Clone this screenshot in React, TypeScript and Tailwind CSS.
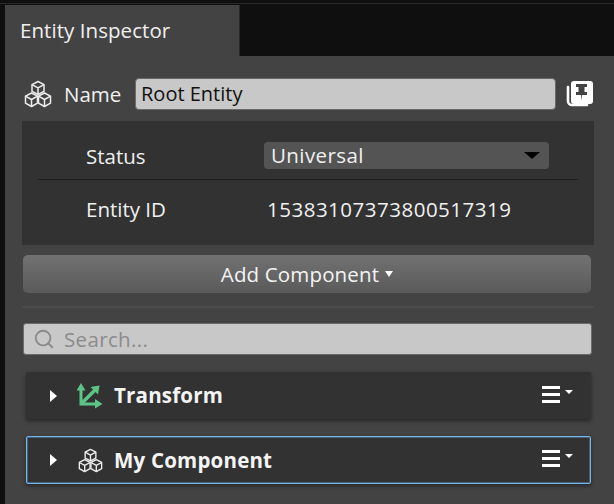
import { Search } from "lucide-react";

const font = { fontFamily: '"Open Sans", "Noto Sans", sans-serif' };

function CubesIcon({ className }: { className?: string }) {
  return (
    <svg viewBox="0 0 28 28" fill="none" stroke="currentColor" strokeWidth="1.5" strokeLinejoin="round" className={className}>
      <path d="M14 1.500l6 3.200v6.600l-6 3.200-6-3.200V4.700z" />
      <path d="M8 4.700l6 3.200 6-3.200M14 7.900v6.600" />
      <path d="M7.500 13l6 3.200v6.900l-6 3.400-6-3.400v-6.900z" />
      <path d="M1.500 16.200l6 3.300 6-3.300M7.500 19.500v7" />
      <path d="M20.500 13l6 3.200v6.900l-6 3.400-6-3.400v-6.900z" />
      <path d="M14.500 16.200l6 3.300 6-3.300M20.500 19.500v7" />
    </svg>
  );
}

function PinIcon() {
  return (
    <svg viewBox="0 0 27 27" className="w-[27px] h-[27px] shrink-0">
      <path d="M2 6v14a4 4 0 0 0 4 4h15" fill="none" stroke="#fff" strokeWidth="2.600" strokeLinecap="round" />
      <rect x="5" y="0" width="22" height="23" rx="3" fill="#fff" />
      <path d="M10 3h11v3h-2.500v5h2.500v3h-5l-.5 6-.5-6h-5v-3h2.500v-5h-2.500z" fill="#434343" />
    </svg>
  );
}

function TransformIcon() {
  return (
    <svg viewBox="0 0 26 26" className="w-[26px] h-[26px] shrink-0" fill="#5cc487">
      {/* up arrow */}
      <path d="M4 0l4.500 7.500h-3v12h-3v-12h-3z" />
      {/* right arrow */}
      <path d="M2.500 19.500h15.500v-3.500l7.500 5-7.500 4.500v-3h-15.500z" />
      {/* diagonal arrow */}
      <path d="M3 19.500l13-13-2.500-2.500 9-1.500-1.500 9-2.500-2.500-13.500 13.500z" />
    </svg>
  );
}

function ComponentRow({ name, icon, selected }: { name: string; icon: React.ReactNode; selected?: boolean }) {
  return (
    <div
      className={`flex items-center ml-[4px] pl-[23px] bg-[#323232] rounded-[2px] border ${
        selected
          ? "h-[48px] border-[#74b8ea] shadow-[0_2px_4px_rgba(0,0,0,0.45),inset_0_0_0_1px_rgba(116,184,234,0.35)]"
          : "h-[47px] border-transparent shadow-[0_2px_4px_rgba(0,0,0,0.45)]"
      }`}
    >
      <span className="w-0 h-0 border-y-[6px] border-y-transparent border-l-[7px] border-l-white" />
      <span className="ml-[20px] flex w-[26px] justify-center">{icon}</span>
      <span className="ml-[11px] text-[20.500px] font-bold tracking-[0.2px] text-[#f4f4f4]">{name}</span>
      <span className="ml-auto mr-[17px] mb-[3px] flex items-start gap-[5px]">
        <span className="flex flex-col gap-[4px] w-[18px]">
          <span className="h-[3px] bg-white" />
          <span className="h-[3px] bg-white" />
          <span className="h-[3px] bg-white" />
        </span>
        <span className="mt-[4px] w-0 h-0 border-x-[4px] border-x-transparent border-t-[4px] border-t-white" />
      </span>
    </div>
  );
}

export default function App() {
  return (
    <div className="h-[504px] w-[614px] overflow-hidden bg-[#0f0f0f] flex flex-col" style={font}>
      <div className="h-[4px] border-b border-[#2a2a2a] shrink-0" />
      <div className="flex-1 flex flex-col pl-[5px] pt-[1px]">
        <div className="h-[51px] w-[235px] shrink-0 bg-[#434343] border-r border-[#2a2a2a] pl-[15px] pt-[10px] text-[20.500px] leading-[30px] tracking-[0.06px] text-[#f0f0f0]">
          Entity Inspector
        </div>
        <div className="flex-1 bg-[#434343] flex flex-col pl-[17px] pr-[20px]">
          <div className="flex items-center h-[65px] pt-[22px] pb-[11px]">
            <CubesIcon className="w-[28px] h-[28px] ml-[2px] text-[#eeeeee] shrink-0" />
            <span className="ml-[12px] w-[71px] shrink-0 text-[20.500px] text-[#f0f0f0]">Name</span>
            <div className="w-[421px] h-[32px] shrink-0 bg-[#c8c8c8] border border-[#6a6a6a] rounded-[4px] pl-[5px] text-[20px] leading-[30px] text-[#111]">
              Root Entity
            </div>
            <span className="ml-[10px] shrink-0 mt-[1px]">
              <PinIcon />
            </span>
          </div>

          <div className="h-[124px] w-[572px] bg-[#323232] flex flex-col px-[16px]">
            <div className="flex items-center h-[59px] border-b border-[#1c1c1c] pl-[48px] pt-[11px] w-[540px]">
              <span className="w-[178px] mt-[2px] text-[20.500px] text-[#f0f0f0]">Status</span>
              <div className="w-[285px] h-[27px] rounded-[4px] bg-[#545454] flex items-center pl-[7px] pr-[9px] text-[20.500px] text-[#f0f0f0] tracking-[0.4px]">
                Universal
                <span className="ml-auto w-0 h-0 border-x-[8px] border-x-transparent border-t-[7px] border-t-black" />
              </div>
            </div>
            <div className="flex items-center h-[60px] pl-[48px] pb-[2px]">
              <span className="w-[181px] text-[20.500px] text-[#f0f0f0]">Entity ID</span>
              <span className="text-[20.500px] tracking-[0.5px] text-[#f0f0f0]">15383107373800517319</span>
            </div>
          </div>

          <button className="mt-[10px] ml-[1px] w-[568px] h-[38px] rounded-[5px] bg-gradient-to-b from-[#727272] to-[#5a5a5a] text-[20.500px] tracking-[0.15px] text-[#f4f4f4] flex items-center justify-center gap-[6px]">
            Add Component
            <span className="w-0 h-0 border-x-[4px] border-x-transparent border-t-[6px] border-t-white" />
          </button>

          <div className="mt-[13px] h-[2px] w-[572px] bg-[#4c4c4c]" />

          <div className="mt-[15px] ml-[1px] w-[569px] h-[32px] bg-[#c8c8c8] border border-[#6a6a6a] rounded-[3px] flex items-center pl-[9px] text-[20.500px] tracking-[0.35px] text-[#8b8b8b]">
            <Search className="w-[22px] h-[22px] text-[#8b8b8b]" strokeWidth={2} />
            <span className="ml-[9px]">Search...</span>
          </div>

          <div className="mt-[17px] flex flex-col gap-[17px] w-[569px]">
            <ComponentRow name="Transform" icon={<TransformIcon />} />
            <ComponentRow name="My Component" selected icon={<CubesIcon className="w-[25px] h-[25px] text-[#eeeeee]" />} />
          </div>
        </div>
      </div>
    </div>
  );
}
